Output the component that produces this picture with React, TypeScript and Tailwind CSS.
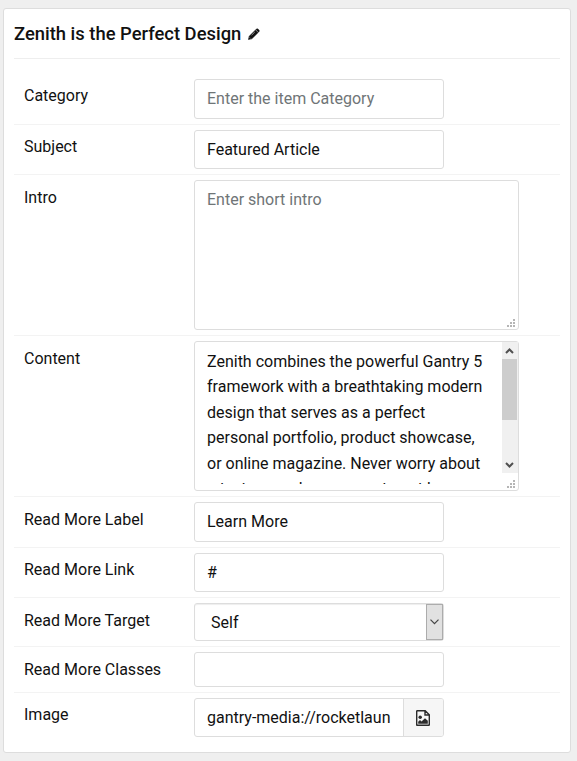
import React from 'react';

function Row({ label, h, lead = 'pt-[5px]', children }: { label: string; h: string; lead?: string; children: React.ReactNode }) {
  return (
    <div className={`flex border-b border-[#f3f3f3] pt-[5px] pl-[10px] last:border-b-0 ${h}`}>
      <div className={`w-[170px] shrink-0 leading-[26px] ${lead}`}>{label}</div>
      {children}
    </div>
  );
}

const box = 'flex shrink-0 items-center rounded-[3px] border border-[#ddd] bg-white px-[12px] w-[250px]';

function Grip() {
  return (
    <svg className="absolute right-[3px] bottom-[2px]" width="8" height="8" viewBox="0 0 8 8" fill="#b5b5b5" shapeRendering="crispEdges">
      <path d="M6 0h2v2H6zM3 3h2v2H3zM6 3h2v2H6zM0 6h2v2H0zM3 6h2v2H3zM6 6h2v2H6z" />
    </svg>
  );
}

export default function App() {
  return (
    <div className="h-[761px] w-[577px] bg-[#efefef] pt-[8px] pl-[3px] text-[16px] text-[#111] [font-family:Roboto,sans-serif]">
      <div className="h-[745px] w-[568px] rounded-[3px] border border-[#ddd] bg-white px-[10px]">
        <div className="flex h-[50px] items-center border-b border-[#eee] text-[18.4px] font-medium">
          Zenith is the Perfect Design
          <svg className="ml-[7px]" width="12" height="12" viewBox="0 0 12 12">
            <path d="M0.4 11.6 L1.2 8.2 L8.2 1.2 Q9.2 0.2 10.2 1.2 L10.9 1.9 Q11.8 2.9 10.9 3.8 L3.8 10.8Z" fill="#111" stroke="#111" strokeWidth=".5" />
            <path d="M3.6 7.2L6.8 4M7.6 1.8L10.3 4.5M1.6 9.4L2.6 10.4" stroke="#fff" strokeWidth=".5" />
          </svg>
        </div>
        <div className="pt-[15px]">
          <Row label="Category" h="h-[51px]" lead="pt-[4px]">
            <div className={`${box} h-[40px] text-[#6f7577]`}>Enter the item Category</div>
          </Row>
          <Row label="Subject" h="h-[50px]" lead="pt-[4px]">
            <div className={`${box} h-[39px]`}>Featured Article</div>
          </Row>
          <Row label="Intro" h="h-[161px]">
            <div className="relative h-[150px] w-[325px] rounded-[3px] border border-[#ddd] px-[12px] pt-[6px] leading-[25.6px] text-[#6f7577]">
              Enter short intro
              <Grip />
            </div>
          </Row>
          <Row label="Content" h="h-[161px]">
            <div className="relative h-[150px] w-[325px] rounded-[3px] border border-[#ddd] pt-[6px] pl-[12px]">
              <div className="h-[136px] overflow-hidden pt-[0.6px] leading-[25.6px] whitespace-nowrap">
                Zenith combines the powerful Gantry 5<br />
                framework with a breathtaking modern<br />
                design that serves as a perfect<br />
                personal portfolio, product showcase,<br />
                or online magazine. Never worry about<br />
                <span className="relative -top-px">a text second memory a to get be</span>
              </div>
              <div className="absolute top-0 right-0 h-[131px] w-[16px] bg-[#f0f0f0]">
                <div className="mt-[17px] h-[61px] w-[15px] bg-[#cdcdcd]" />
                <svg className="absolute top-0 left-0" width="16" height="131" fill="none" stroke="#505050" strokeWidth="2">
                  <path d="M4 11L7.5 7.5L11 11M4 121L7.5 124.5L11 121" />
                </svg>
              </div>
              <Grip />
            </div>
          </Row>
          <Row label="Read More Label" h="h-[51px]">
            <div className={`${box} h-[40px]`}>Learn More</div>
          </Row>
          <Row label="Read More Link" h="h-[50px]" lead="pt-[4px]">
            <div className={`${box} h-[39px]`}>#</div>
          </Row>
          <Row label="Read More Target" h="h-[49px]">
            <div className="flex h-[38px] w-[250px] items-center justify-between rounded-[3px] border border-[#ddd] pl-[16px] shadow-[inset_0_1px_1px_#eee]">
              <span className="pt-[2px]">Self</span>
              <div className="flex h-[36px] w-[17px] items-center justify-center border border-[#acacac] bg-[#e1e1e1]">
                <svg className="mr-px" width="9" height="6" viewBox="0 0 9 6" fill="none" stroke="#444" strokeWidth="1.2">
                  <path d="M.5 .7L4.5 4.7L8.5 .7" />
                </svg>
              </div>
            </div>
          </Row>
          <Row label="Read More Classes" h="h-[46px]">
            <div className={`${box} h-[35px]`} />
          </Row>
          <Row label="Image" h="h-[50px]" lead="pt-[4px]">
            <div className="flex h-[39px] w-[250px] overflow-hidden rounded-[3px] border border-[#ddd]">
              <div className="flex w-[209px] items-center border-r border-[#ddd] pl-[12px]">gantry-media://rocketlaun</div>
              <div className="flex flex-1 items-center justify-center bg-[#f6f6f6] pr-[2px]">
                <svg width="14" height="16" viewBox="0 0 14 16" fill="none" stroke="#2b2b2b" strokeWidth="1.4">
                  <path d="M1.4 .7H9.2L13.3 4.8V14.7Q13.3 15.3 12.7 15.3H1.3Q.7 15.3 .7 14.7V1.3Q.7 .7 1.4 .7ZM9 .8V5H13.2" />
                  <circle cx="4.2" cy="7.3" r="1.7" fill="#2b2b2b" stroke="none" />
                  <path d="M2.2 13.8V11.7L4 10.1L5.5 11.4L9 8.2L11.8 10.8V13.8Z" fill="#2b2b2b" stroke="none" />
                </svg>
              </div>
            </div>
          </Row>
        </div>
      </div>
    </div>
  );
}
